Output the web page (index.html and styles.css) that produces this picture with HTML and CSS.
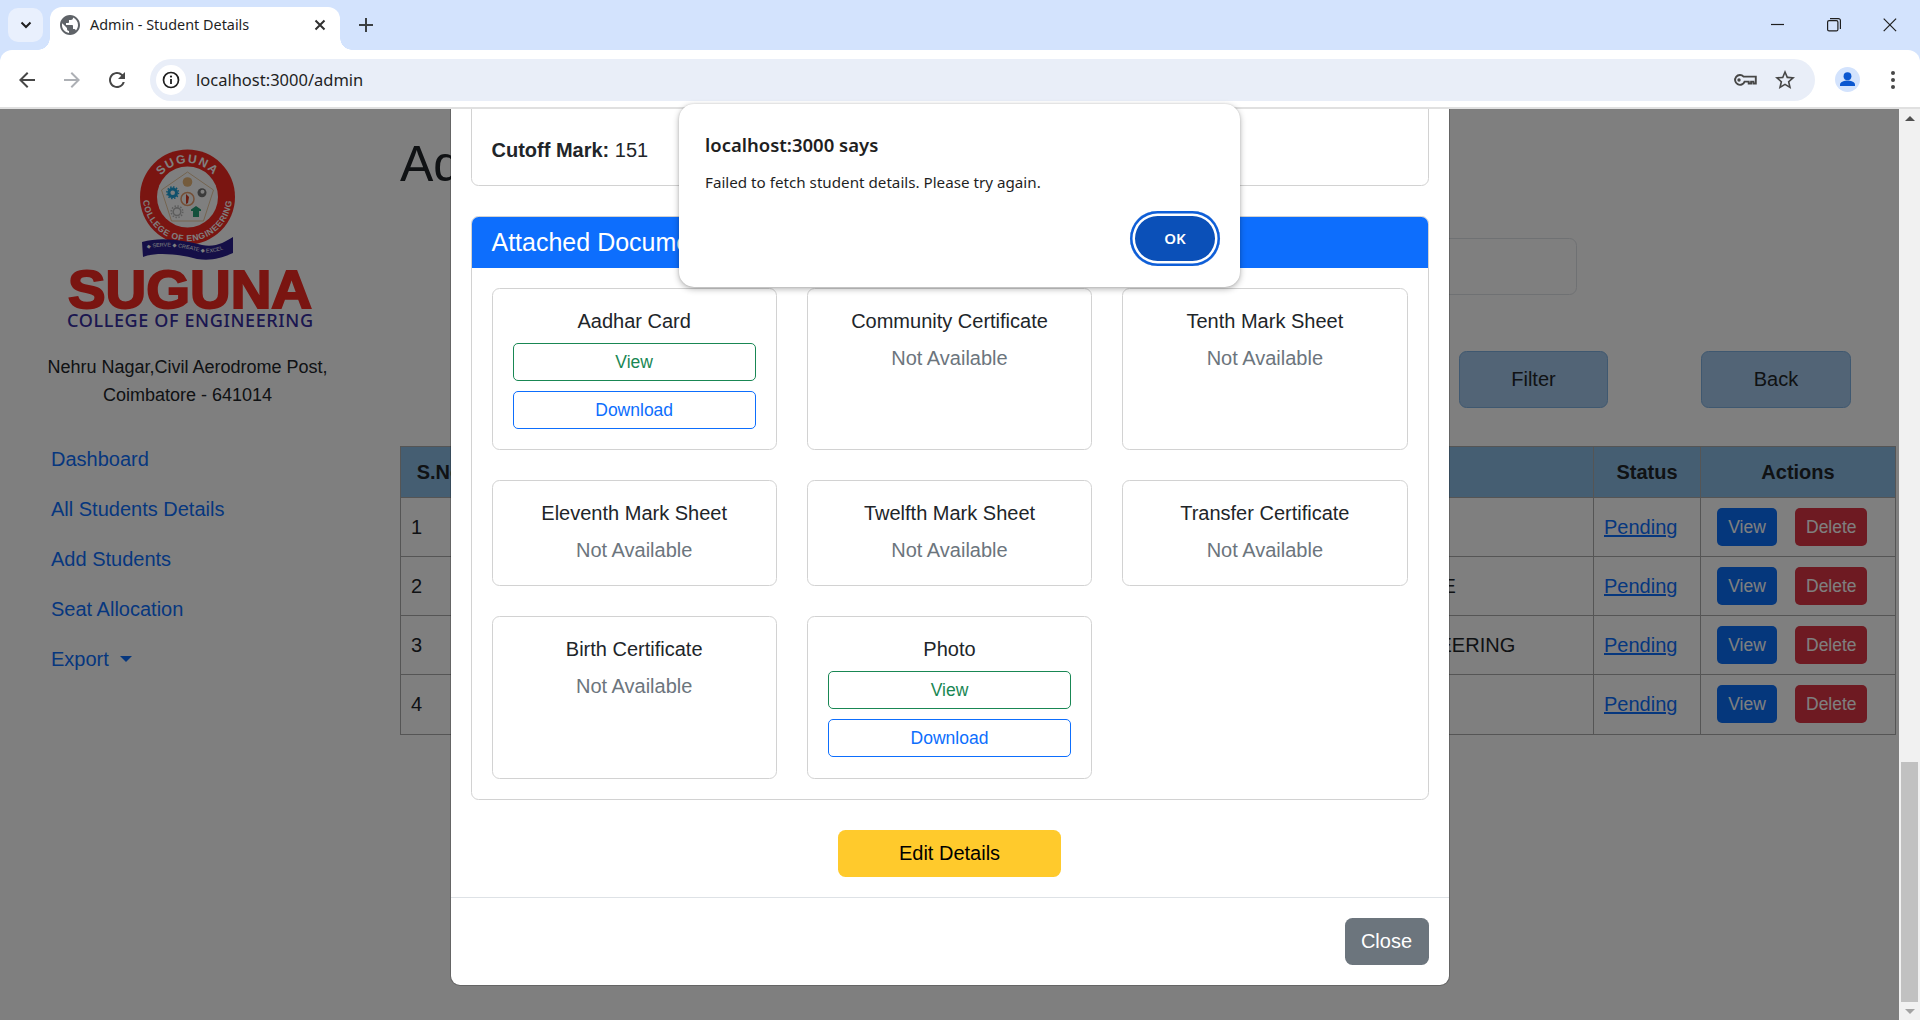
FILE: index.html
```html
<!DOCTYPE html>
<html lang="en">
<head>
<meta charset="utf-8">
<title>Admin - Student Details</title>
<link rel="stylesheet" href="styles.css">
</head>
<body>
<header class="browser">
  <div class="tabstrip">
    <button class="tab-menu" aria-label="Tab list"><svg width="14" height="14" viewBox="0 0 14 14"><path d="M2.5 4.5 7 9l4.5-4.5" fill="none" stroke="#1f1f1f" stroke-width="2"/></svg></button>
    <div class="tab">
      <svg class="tab-globe" width="20" height="20" viewBox="2 2 20 20"><path fill="#5f6368" d="M12 2C6.48 2 2 6.48 2 12s4.48 10 10 10 10-4.48 10-10S17.52 2 12 2zm-1 17.93c-3.95-.49-7-3.85-7-7.93 0-.62.08-1.21.21-1.79L9 15v1c0 1.1.9 2 2 2v1.93zm6.9-2.54c-.26-.81-1-1.39-1.9-1.39h-1v-3c0-.55-.45-1-1-1H8v-2h2c.55 0 1-.45 1-1V7h2c1.1 0 2-.9 2-2v-.41c2.93 1.19 5 4.06 5 7.41 0 2.08-.8 3.97-2.1 5.39z"/></svg>
      <span class="tab-title">Admin - Student Details</span>
      <svg class="tab-close" width="12" height="12" viewBox="0 0 12 12"><path d="M1.5 1.5l9 9m0-9l-9 9" stroke="#303030" stroke-width="2"/></svg>
    </div>
    <svg class="new-tab" width="14" height="14" viewBox="0 0 14 14"><path d="M7 0v14M0 7h14" stroke="#3c4043" stroke-width="2"/></svg>
    <div class="window-controls">
      <svg width="14" height="14" viewBox="0 0 14 14"><path d="M0 6.500h13" stroke="#1f1f1f" stroke-width="1.200"/></svg>
      <svg width="14" height="14" viewBox="0 0 14 14"><rect x=".6" y="2.600" width="10.300" height="10.300" rx="1.500" fill="none" stroke="#1f1f1f" stroke-width="1.200"/><path d="M3 .6h8.400a2 2 0 0 1 2 2V11" fill="none" stroke="#1f1f1f" stroke-width="1.200"/></svg>
      <svg width="14" height="14" viewBox="0 0 14 14"><path d="M.7 .7l12.400 12.400m0-12.400L.7 13.100" stroke="#1f1f1f" stroke-width="1.200"/></svg>
    </div>
  </div>
  <div class="toolbar">
    <div class="nav-icons">
      <svg width="24" height="24" viewBox="0 0 24 24"><path fill="#474747" d="M20 11H7.83l5.59-5.59L12 4l-8 8 8 8 1.41-1.41L7.83 13H20v-2z"/></svg>
      <svg width="24" height="24" viewBox="0 0 24 24"><path fill="#adb0b5" d="M4 11h12.170l-5.590-5.590L12 4l8 8-8 8-1.410-1.410L16.170 13H4v-2z"/></svg>
      <svg width="24" height="24" viewBox="0 0 24 24"><path fill="#474747" d="M17.65 6.35A7.95 7.95 0 0 0 12 4C7.58 4 4 7.58 4 12s3.58 8 8 8c3.73 0 6.84-2.55 7.73-6h-2.08A5.99 5.99 0 0 1 12 18c-3.31 0-6-2.69-6-6s2.69-6 6-6c1.66 0 3.14.69 4.22 1.78L13 11h7V4l-2.35 2.35z"/></svg>
    </div>
    <div class="omnibox">
      <span class="site-chip"><svg width="18" height="18" viewBox="0 0 18 18"><circle cx="9" cy="9" r="7.500" fill="none" stroke="#1f1f1f" stroke-width="1.700"/><path d="M9 8v5" stroke="#1f1f1f" stroke-width="1.800"/><circle cx="9" cy="5.600" r="1.100" fill="#1f1f1f"/></svg></span>
      <span class="url">localhost:3000/admin</span>
      <span class="omni-actions">
        <svg width="24" height="14" viewBox="0 0 24 14"><circle cx="6" cy="7" r="1.700" fill="#474747"/><path d="M10.600 3.600h12.200v6.900h-2.400V8.600h-2.300v1.900h-2.400V8.600h-4.100A4.900 4.900 0 1 1 10.600 3.600z" fill="none" stroke="#474747" stroke-width="1.900"/></svg>
        <svg width="24" height="24" viewBox="0 0 24 24"><path fill="#474747" d="M22 9.24l-7.19-.62L12 2 9.19 8.63 2 9.24l5.46 4.73L5.82 21 12 17.27 18.18 21l-1.63-7.03L22 9.24zM12 15.4l-3.76 2.27 1-4.28-3.32-2.88 4.38-.38L12 6.1l1.71 4.04 4.38.38-3.32 2.88 1 4.28L12 15.4z"/></svg>
      </span>
    </div>
    <span class="avatar"><svg width="25" height="25" viewBox="0 0 25 25"><circle cx="12.500" cy="12.500" r="12.500" fill="#d3e3fd"/><circle cx="12.500" cy="9.200" r="3.900" fill="#0b57d0"/><path fill="#0b57d0" d="M5 19v-1.600c0-2.600 5-3.900 7.500-3.900s7.500 1.300 7.500 3.900V19z"/></svg></span>
    <svg class="kebab" width="6" height="20" viewBox="0 0 6 20"><circle cx="3" cy="3" r="2" fill="#474747"/><circle cx="3" cy="10" r="2" fill="#474747"/><circle cx="3" cy="17" r="2" fill="#474747"/></svg>
  </div>
</header>

<div class="viewport">
  <div class="page-area">
    <div class="page">
      <aside class="sidebar">
        <svg class="logo" width="260" height="189" viewBox="0 0 260 189" role="img" aria-label="Suguna College of Engineering">
          <defs>
            <path id="arcTop" d="M96.500 51a34 34 0 0 1 68 0"/>
            <path id="arcBottom" d="M87.300 40a44.500 44.500 0 1 0 86.400 0"/>
            <path id="bannerLine" d="M90 102.500C110 98 128 102 143 106C155 108 165 104 175 100"/>
          </defs>
          <circle cx="130.500" cy="51" r="47.500" fill="#f52a22"/>
          <circle cx="130.500" cy="51" r="30.500" fill="#fff"/>
          <text class="ring-text ring-top"><textPath href="#arcTop" startOffset="50%" text-anchor="middle">SUGUNA</textPath></text>
          <text class="ring-text ring-bottom"><textPath href="#arcBottom" startOffset="50%" text-anchor="middle">COLLEGE OF ENGINEERING</textPath></text>
          <path d="M130.500 26l26 18-10 31h-32l-10-31z" fill="none" stroke="#e9c9a0" stroke-width="1" stroke-linejoin="round"/>
          <circle cx="130.500" cy="36" r="4.800" fill="#e8b678"/>
          <circle cx="115.700" cy="46.700" r="3.800" fill="none" stroke="#1fa0d8" stroke-width="3"/>
          <circle cx="115.700" cy="46.700" r="5.800" fill="none" stroke="#1fa0d8" stroke-width="1.500" stroke-dasharray="1.500 1.500"/>
          <circle cx="145" cy="46.700" r="4.500" fill="#777"/>
          <circle cx="145.500" cy="45.700" r="2" fill="#fff"/>
          <circle cx="120" cy="65.700" r="3.800" fill="none" stroke="#bbb" stroke-width="1.600"/>
          <circle cx="120" cy="65.700" r="5.800" fill="none" stroke="#bbb" stroke-width="1.500" stroke-dasharray="1.500 1.500"/>
          <path d="M139 60l5 3.500v1.500h-2v6h-6v-6h-2v-1.500z" fill="#28a078"/>
          <circle cx="130.500" cy="53" r="6.500" fill="#fff" stroke="#e8a070" stroke-width="1.500"/>
          <path d="M129 48l3 3-1 6-2 1z" fill="#d83a20"/>
          <path d="M85 96C105 90 130 95 145 99C158 102 168 96 176 91V107C165 112 155 115 140 113C120 108 100 106 86 111Z" fill="#2a1f8e"/>
          <text class="banner-text"><textPath href="#bannerLine">&#9670; SERVE &#9670; CREATE &#9670; EXCEL</textPath></text>
          <text class="logo-name" x="11" y="162" textLength="244" lengthAdjust="spacingAndGlyphs">SUGUNA</text>
          <text class="logo-sub" x="10" y="181" textLength="246" lengthAdjust="spacing">COLLEGE OF ENGINEERING</text>
        </svg>
        <p class="address">Nehru Nagar,Civil Aerodrome Post,<br>Coimbatore - 641014</p>
        <nav class="side-nav">
          <a href="#">Dashboard</a>
          <a href="#">All Students Details</a>
          <a href="#">Add Students</a>
          <a href="#">Seat Allocation</a>
          <a href="#" class="export">Export<span class="caret"></span></a>
        </nav>
      </aside>
      <main class="main">
        <h1 class="page-title">Admin Dashboard</h1>
        <div class="search-row"><input class="search" type="text" aria-label="Search"></div>
        <div class="button-row">
          <button class="soft-btn filter">Filter</button>
          <button class="soft-btn back">Back</button>
        </div>
        <table class="students">
          <colgroup><col class="c-no"><col class="c-name"><col class="c-reg"><col class="c-dept"><col class="c-status"><col class="c-actions"></colgroup>
          <thead><tr><th>S.No</th><th>Name</th><th>Register No</th><th class="th-left">Department</th><th>Status</th><th>Actions</th></tr></thead>
          <tbody>
            <tr><td>1</td><td></td><td></td><td>CIVIL ENGINEERING</td><td><a href="#">Pending</a></td><td><div class="row-actions"><button class="act view">View</button><button class="act del">Delete</button></div></td></tr>
            <tr><td>2</td><td></td><td></td><td>COMPUTER SCIENCE</td><td><a href="#">Pending</a></td><td><div class="row-actions"><button class="act view">View</button><button class="act del">Delete</button></div></td></tr>
            <tr><td>3</td><td></td><td></td><td>ELECTRICAL ENGINEERING</td><td><a href="#">Pending</a></td><td><div class="row-actions"><button class="act view">View</button><button class="act del">Delete</button></div></td></tr>
            <tr class="last-row"><td>4</td><td></td><td></td><td>CIVIL ENGINEERING</td><td><a href="#">Pending</a></td><td><div class="row-actions"><button class="act view">View</button><button class="act del">Delete</button></div></td></tr>
          </tbody>
        </table>
      </main>
    </div>
    <div class="backdrop"></div>
    <div class="modal-layer">
      <section class="modal">
        <div class="modal-body">
          <div class="card info-card"><p><strong>Cutoff Mark:</strong> 151</p></div>
          <div class="card docs">
            <h5 class="docs-head">Attached Documents</h5>
            <div class="docs-grid">
              <article class="doc"><h6>Aadhar Card</h6><a class="doc-btn green" href="#">View</a><a class="doc-btn blue" href="#">Download</a></article>
              <article class="doc"><h6>Community Certificate</h6><p>Not Available</p></article>
              <article class="doc"><h6>Tenth Mark Sheet</h6><p>Not Available</p></article>
              <article class="doc"><h6>Eleventh Mark Sheet</h6><p>Not Available</p></article>
              <article class="doc"><h6>Twelfth Mark Sheet</h6><p>Not Available</p></article>
              <article class="doc"><h6>Transfer Certificate</h6><p>Not Available</p></article>
              <article class="doc"><h6>Birth Certificate</h6><p>Not Available</p></article>
              <article class="doc"><h6>Photo</h6><a class="doc-btn green" href="#">View</a><a class="doc-btn blue" href="#">Download</a></article>
            </div>
          </div>
          <div class="edit-row"><button class="edit">Edit Details</button></div>
        </div>
        <footer class="modal-footer"><button class="close">Close</button></footer>
      </section>
    </div>
  </div>
  <div class="scrollbar">
    <span class="arrow up"></span>
    <span class="thumb"></span>
    <span class="arrow down"></span>
  </div>
</div>

<div class="alert" role="alertdialog">
  <h2>localhost:3000 says</h2>
  <p>Failed to fetch student details. Please try again.</p>
  <div class="alert-actions"><button class="ok">OK</button></div>
</div>
</body>
</html>
```

FILE: styles.css
```css
* { box-sizing: border-box; }
html, body { margin: 0; height: 100%; overflow: hidden; }
body {
  position: relative;
  display: flex;
  flex-direction: column;
  height: 1020px;
  font-family: "Liberation Sans", Arial, sans-serif;
  font-size: 20px;
  line-height: 30px;
  color: #212529;
  background: #fff;
}
button { font-family: inherit; cursor: pointer; }

/* Browser frame */
.browser { flex: none; height: 109px; background: #d3e3fd; font-family: "Noto Sans", sans-serif; }
.tabstrip { display: flex; align-items: flex-start; height: 50px; padding: 7px 0 0 8px; }
.tab-menu {
  display: flex; align-items: center; justify-content: center;
  width: 35px; height: 34px; margin-top: 1px; padding: 0;
  border: 0; border-radius: 10px; background: #e9f0fd;
}
.tab {
  position: relative;
  display: flex; align-items: center;
  width: 290px; height: 43px; margin-left: 7px; padding: 0 14px 7px 10px;
  background: #fff; border-radius: 12px 12px 0 0;
}
.tab::before, .tab::after { content: ""; position: absolute; bottom: 0; width: 12px; height: 12px; }
.tab::before { left: -12px; background: radial-gradient(circle at 0 0, transparent 11.5px, #fff 12px); }
.tab::after { right: -12px; background: radial-gradient(circle at 100% 0, transparent 11.5px, #fff 12px); }
.tab-globe { flex: none; }
.tab-title { flex: 1; margin-left: 10px; font-size: 14.4px; line-height: 20px; color: #1f1f1f; white-space: nowrap; }
.tab-close { flex: none; }
.new-tab { margin: 11px 0 0 19px; }
.window-controls { display: flex; gap: 42px; margin: 11px 23px 0 auto; }

.toolbar {
  display: flex; align-items: center;
  height: 59px; padding: 2px 0 0 15px;
  background: #fff; border-radius: 12px 12px 0 0;
  border-bottom: 2px solid #e0e0e0;
}
.nav-icons { display: flex; gap: 21px; }
.omnibox {
  display: flex; align-items: center;
  width: 1665px; height: 42px; margin-left: 21px; padding: 0 18px 0 6px;
  background: #e9eef8; border-radius: 21px;
}
.site-chip { display: flex; align-items: center; justify-content: center; width: 30px; height: 30px; border-radius: 50%; background: #fff; }
.url { margin-left: 10px; font-size: 16.5px; line-height: 22px; color: #1f1f1f; }
.omni-actions { display: flex; align-items: center; gap: 16px; margin-left: auto; }
.avatar { display: flex; margin-left: 20px; }
.kebab { margin-left: 30px; }

/* Page under the modal */
.viewport { flex: 1; display: flex; min-height: 0; }
.page-area { position: relative; flex: 1; min-width: 0; overflow: hidden; }
.page { display: flex; height: 100%; }
.sidebar { flex: none; width: 375px; padding-top: 37px; }
.logo { display: block; margin-left: 57px; }
.ring-text { fill: #fff; font-family: "Liberation Sans", sans-serif; font-weight: 700; }
.ring-top { font-size: 12px; letter-spacing: 1.5px; }
.ring-bottom { font-size: 8.6px; letter-spacing: .6px; }
.banner-text { fill: #fff; font-family: "Liberation Sans", "DejaVu Sans", sans-serif; font-size: 5.4px; }
.logo-name { fill: #f52a22; stroke: #f52a22; stroke-width: 2px; font-family: "Liberation Sans", sans-serif; font-size: 54px; font-weight: 700; }
.logo-sub { fill: #362ea0; font-family: "Noto Sans", sans-serif; font-size: 18px; font-weight: 500; }
.address { margin: 18px 0 0; font-size: 18px; line-height: 28px; text-align: center; }
.side-nav { display: flex; flex-direction: column; margin-top: 25px; padding-left: 51px; }
.side-nav a { padding: 10px 0; color: #0d6efd; text-decoration: none; }
.caret {
  display: inline-block; margin-left: 11px; vertical-align: 4px;
  border-top: 6px solid #0d6efd; border-left: 6px solid transparent; border-right: 6px solid transparent;
}

.main { flex: 1; min-width: 0; padding: 25px 4px 0 25px; }
.page-title { margin: 0; font-size: 50px; line-height: 60px; font-weight: 400; white-space: nowrap; }
.search-row { display: flex; justify-content: flex-end; margin-top: 44px; padding-right: 318px; }
.search { display: block; width: 500px; height: 57px; border: 1px solid #dee2e6; border-radius: 7.5px; background: #fff; }
.button-row { display: flex; justify-content: flex-end; gap: 93px; margin-top: 56px; padding-right: 44px; }
.soft-btn {
  height: 57px; font-size: 20px; color: #212529;
  background: #a4c8ec; border: 1px solid #7fb0e0; border-radius: 7.5px;
}
.filter { width: 149px; }
.back { width: 150px; }
.students { width: 1495px; margin-top: 38px; table-layout: fixed; border-collapse: collapse; }
.c-no { width: 78px; } .c-name { width: 382px; } .c-reg { width: 376px; } .c-dept { width: 357px; } .c-status { width: 107px; } .c-actions { width: 195px; }
.students th, .students td { padding: 10px; border: 1px solid #aaa; white-space: nowrap; overflow: hidden; }
.students th { background: #8abce4; text-align: center; font-weight: 700; }
.students .th-left { text-align: left; }
.students a { color: #0d6efd; }
.students td:last-child { padding: 10px 16px; }
.students .last-row td { padding-bottom: 11px; }
.row-actions { display: flex; gap: 18px; }
.act { height: 38px; padding: 0 11px; border: 0; border-radius: 5px; font-size: 17.5px; color: #fff; }
.view { width: 60px; background: #0a6ef8; }
.del { width: 72px; background: #dc3545; }

/* Overlays */
.backdrop { position: absolute; inset: 0; background: rgba(0, 0, 0, .5); }
.modal-layer { position: absolute; inset: 0; display: flex; justify-content: center; align-items: flex-end; padding-bottom: 34px; overflow: hidden; }
.modal { flex: none; width: 1000px; background: #fff; border: 1px solid rgba(0, 0, 0, .2); border-radius: 10px; background-clip: padding-box; }
.modal-body { padding: 20px; }
.card { border: 1px solid #d2d2d2; border-radius: 7.5px; background: #fff; }
.info-card { padding: 60px 20px 20px; margin-bottom: 30px; }
.info-card p { margin: 0; }
.docs-head {
  margin: 0; height: 51px; padding: 10px 20px; background: #0d6efd; color: #fff;
  font-size: 25px; line-height: 30px; font-weight: 400; border-radius: 6.5px 6.5px 0 0;
}
.docs-grid { display: grid; grid-template-columns: repeat(3, 1fr); grid-template-rows: auto auto 163px; gap: 30px; padding: 20px; }
.doc { display: flex; flex-direction: column; padding: 20px; border: 1px solid #d2d2d2; border-radius: 7.5px; text-align: center; }
.doc h6 { margin: 0 0 10px; font-size: 20px; line-height: 24px; font-weight: 400; }
.doc p { margin: 0; color: #6c757d; }
.doc-btn { display: block; height: 38px; border: 1px solid; border-radius: 5px; font-size: 17.5px; line-height: 36px; text-decoration: none; }
.doc-btn + .doc-btn { margin-top: 10px; }
.green { color: #198754; border-color: #198754; }
.blue { color: #0d6efd; border-color: #0d6efd; }
.edit-row { display: flex; justify-content: center; margin-top: 30px; }
.edit { width: 223px; height: 47px; font-size: 20px; color: #000; background: #ffca2c; border: 0; border-radius: 7.5px; }
.modal-footer { display: flex; justify-content: flex-end; padding: 20px; border-top: 1px solid #dee2e6; }
.close { width: 84px; height: 47px; font-size: 20px; color: #fff; background: #6c757d; border: 0; border-radius: 7.5px; }

.scrollbar { flex: none; display: flex; flex-direction: column; align-items: center; width: 21px; background: #f1f1f1; }
.arrow { display: block; flex: none; width: 0; height: 0; border-left: 5px solid transparent; border-right: 5px solid transparent; }
.arrow.up { margin-top: 7px; border-bottom: 5px solid #505050; }
.arrow.down { margin: 7px 0 6px; border-top: 5px solid #a3a3a3; }
.thumb { flex: none; width: 17px; height: 240px; margin-top: auto; background: #c1c1c1; }

.alert {
  position: absolute; top: 104px; left: 679px;
  width: 561px; height: 183px; padding: 27px 20px 21px 26px;
  display: flex; flex-direction: column;
  background: #fff; border-radius: 15px;
  box-shadow: 0 2px 6px rgba(0, 0, 0, .3), 0 0 2px rgba(0, 0, 0, .15);
  font-family: "Noto Sans", sans-serif; color: #1f1f1f;
}
.alert h2 { margin: 1px 0 0; font-size: 18.5px; line-height: 26px; font-weight: 600; }
.alert p { margin: 13px 0 0; font-size: 15.2px; line-height: 22px; }
.alert-actions { display: flex; justify-content: flex-end; margin-top: auto; }
.ok {
  width: 90px; height: 55px; padding: 0 0 2px; border: 0; border-radius: 28px;
  background: #0b50b8; color: #fff; font-size: 15px; font-weight: 600;
  box-shadow: inset 0 0 0 2.5px #0f5fd8, inset 0 0 0 5px #fff;
}
```
